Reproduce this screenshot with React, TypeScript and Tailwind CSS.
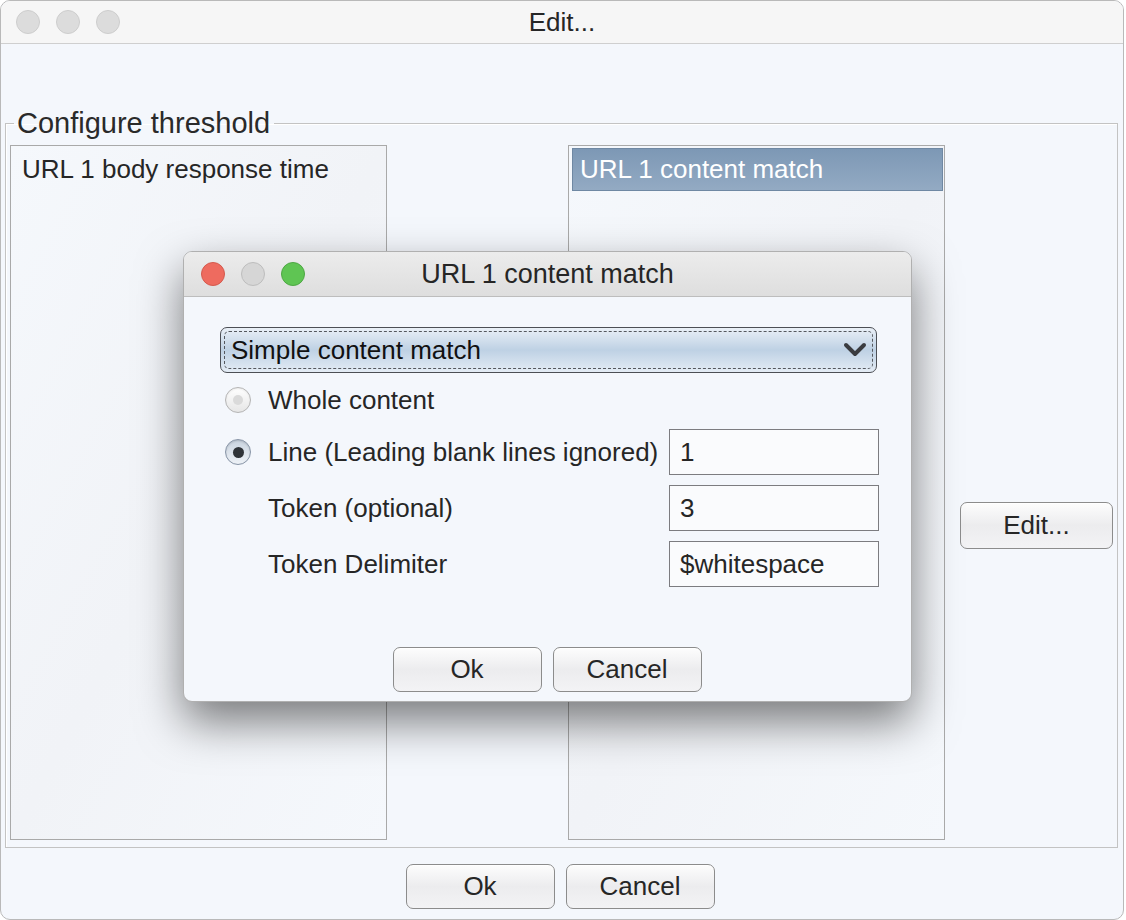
import React from "react";

const font = { fontFamily: '"Liberation Sans", Arial, sans-serif' };

function AquaButton({ label, className = "" }: { label: string; className?: string }) {
  return (
    <button
      className={`flex items-center justify-center rounded-[7px] border border-[#8c8c8c] bg-gradient-to-b from-[#fdfdfd] via-[#ececee] to-[#f3f3f5] text-[26px] text-[#262626] shadow-[inset_0_1px_0_#ffffff] ${className}`}
    >
      {label}
    </button>
  );
}

function Light({ color }: { color: "gray" | "red" | "green" | "mute" }) {
  const styles = {
    gray: "bg-[#dcdcdc] border-[#cdcdcd]",
    mute: "bg-[#d6d6d6] border-[#bdbdbd]",
    red: "bg-[#ee6b5f] border-[#d45a4e]",
    green: "bg-[#5fc553] border-[#4ea744]",
  };
  return <span className={`block h-[24px] w-[24px] rounded-full border ${styles[color]}`} />;
}

function Radio({ checked }: { checked?: boolean }) {
  if (checked) {
    return (
      <span className="flex h-[26px] w-[26px] items-center justify-center rounded-full border border-[#8794a6] bg-gradient-to-b from-[#c9d3df] to-[#eef2f7] shadow-[inset_0_1px_2px_rgba(0,0,0,0.15)]">
        <span className="block h-[11px] w-[11px] rounded-full bg-[#2f3338]" />
      </span>
    );
  }
  return (
    <span className="flex h-[26px] w-[26px] items-center justify-center rounded-full border border-[#b4b4b4] bg-gradient-to-b from-[#ffffff] to-[#e6e6e6] shadow-[inset_0_1px_2px_rgba(0,0,0,0.08)]">
      <span className="block h-[10px] w-[10px] rounded-full bg-[#dadada]" />
    </span>
  );
}

function Field({ value }: { value: string }) {
  return (
    <div className="flex h-[46px] w-[210px] items-center border border-[#7c7c80] bg-[#fafbfd] px-[10px] text-[26px] text-[#262626]">
      {value}
    </div>
  );
}

export default function App() {
  return (
    <div className="h-[920px] w-[1126px] overflow-hidden bg-white" style={font}>
      <div className="relative flex h-[920px] w-[1124px] flex-col overflow-hidden rounded-[10px] border border-[#b9b9b9] bg-[#f4f7fc] text-[#262626]">
        {/* window title bar */}
        <div className="relative flex h-[43px] shrink-0 items-center border-b border-[#cfcfcf] bg-[#f6f6f6]">
          <div className="flex gap-[16px] pl-[15px]">
            <Light color="gray" />
            <Light color="gray" />
            <Light color="gray" />
          </div>
          <div className="absolute inset-0 flex items-center justify-center text-[26px]">Edit...</div>
        </div>

        <fieldset className="ml-[4px] mr-[5px] mt-[64px] border border-[#c3c3c3] px-[4px] pb-[7px] pt-[7px] shadow-[inset_1px_1px_0_#ffffff]">
          <legend className="ml-[4px] px-[3px] pr-[4px] text-[29px] leading-[30px] text-[#2a2a2a]">
            Configure threshold
          </legend>
          <div className="flex">
            <div className="h-[695px] w-[377px] border border-[#a9a9a9] bg-gradient-to-br from-[#f5f8fc] via-[#f1f3f7] to-[#f5f8fc] px-[3px] pt-[2px]">
              <div className="flex h-[43px] items-center px-[8px] text-[26px]">URL 1 body response time</div>
            </div>
            <div className="ml-[181px] h-[695px] w-[377px] border border-[#a9a9a9] bg-gradient-to-br from-[#f5f8fc] via-[#f1f3f7] to-[#f5f8fc] pl-[3px] pr-[1px] pt-[2px]">
              <div className="flex h-[43px] items-center border border-[#6f88a3] bg-gradient-to-b from-[#7d98b5] to-[#93aac3] px-[7px] text-[26px] text-white">
                URL 1 content match
              </div>
            </div>
            <AquaButton label="Edit..." className="ml-[15px] mt-[357px] h-[47px] w-[153px]" />
          </div>
        </fieldset>

        <div className="mt-[16px] flex justify-center gap-[11px] pr-[4px]">
          <AquaButton label="Ok" className="h-[45px] w-[149px]" />
          <AquaButton label="Cancel" className="h-[45px] w-[149px]" />
        </div>

        {/* modal dialog */}
        <div className="absolute left-[182px] top-[250px] flex h-[451px] w-[729px] flex-col overflow-hidden rounded-[9px] border border-[#b0b0b0] bg-[#f4f7fc] shadow-[0_20px_45px_rgba(0,0,0,0.5)]">
          <div className="relative flex h-[45px] shrink-0 items-center border-b border-[#bdbdbd] bg-gradient-to-b from-[#ececec] to-[#dedede]">
            <div className="flex gap-[16px] pl-[17px]">
              <Light color="red" />
              <Light color="mute" />
              <Light color="green" />
            </div>
            <div className="absolute inset-0 flex items-center justify-center text-[27px]">URL 1 content match</div>
          </div>

          <div className="flex flex-col pl-[36px] pr-[34px] pt-[30px]">
            <div className="relative flex h-[46px] items-center rounded-[7px] border-[1.5px] border-[#4c4f55] bg-gradient-to-b from-[#eaf0f7] via-[#bed1e4] to-[#e4ecf5] px-[10px] text-[26px] text-[#111]">
              <div className="pointer-events-none absolute inset-[3px] rounded-[5px] border border-dashed border-[#55585e]" />
              <span className="flex-1">Simple content match</span>
              <svg width="24" height="16" viewBox="0 0 24 16" className="mr-[-1px]">
                <polyline points="3,3 12,12 21,3" fill="none" stroke="#3a3c40" strokeWidth="4" strokeLinecap="round" strokeLinejoin="round" />
              </svg>
            </div>

            <div className="mt-[4px] grid grid-cols-[48px_401px_210px] items-center text-[26px]">
              <div className="flex h-[46px] items-center pl-[5px]">
                <Radio />
              </div>
              <div className="col-span-2">Whole content</div>
            </div>
            <div className="mt-[6px] grid grid-cols-[48px_401px_210px] items-center text-[26px]">
              <div className="flex items-center pl-[5px]">
                <Radio checked />
              </div>
              <div>Line (Leading blank lines ignored)</div>
              <Field value="1" />
            </div>
            <div className="mt-[10px] grid grid-cols-[48px_401px_210px] items-center text-[26px]">
              <div />
              <div>Token (optional)</div>
              <Field value="3" />
            </div>
            <div className="mt-[10px] grid grid-cols-[48px_401px_210px] items-center text-[26px]">
              <div />
              <div>Token Delimiter</div>
              <Field value="$whitespace" />
            </div>

            <div className="mt-[60px] flex justify-center gap-[11px] pr-[3px]">
              <AquaButton label="Ok" className="h-[45px] w-[149px]" />
              <AquaButton label="Cancel" className="h-[45px] w-[149px]" />
            </div>
          </div>
        </div>
      </div>
    </div>
  );
}
